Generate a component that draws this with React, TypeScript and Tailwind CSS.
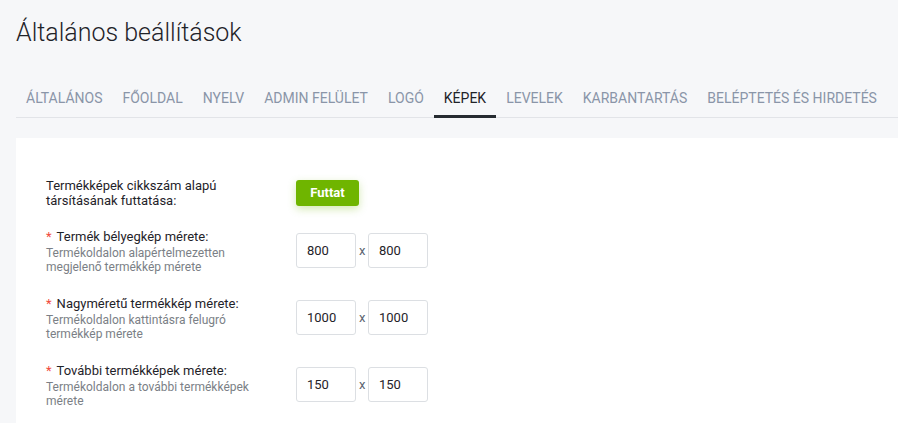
import React from "react";

const tabs = [
  "Általános",
  "Főoldal",
  "Nyelv",
  "Admin felület",
  "Logó",
  "Képek",
  "Levelek",
  "Karbantartás",
  "Beléptetés és hirdetés",
];

type SizeRow = {
  label: string;
  desc: string[];
  w: string;
  h: string;
};

const sizeRows: SizeRow[] = [
  {
    label: "Termék bélyegkép mérete:",
    desc: ["Termékoldalon alapértelmezetten", "megjelenő termékkép mérete"],
    w: "800",
    h: "800",
  },
  {
    label: "Nagyméretű termékkép mérete:",
    desc: ["Termékoldalon kattintásra felugró", "termékkép mérete"],
    w: "1000",
    h: "1000",
  },
  {
    label: "További termékképek mérete:",
    desc: ["Termékoldalon a további termékképek", "mérete"],
    w: "150",
    h: "150",
  },
];

function SizeInput({ value }: { value: string }) {
  return (
    <input
      defaultValue={value}
      className="w-[60px] h-[35px] rounded-[3px] border border-[#dcdfe3] bg-white pl-[10px] text-[13px] text-[#1f2329] outline-none"
    />
  );
}

export default function App() {
  return (
    <div className="min-h-screen bg-[#f6f7f9] font-['Roboto',sans-serif] overflow-hidden">
      {/* Page title */}
      <h1 className="pl-4 pt-[17px] text-[25px] leading-[32px] font-light text-[#1f2329]">
        Általános beállítások
      </h1>

      {/* Tabs */}
      <div className="mt-[39px] ml-4 flex border-b border-[#e2e4e8] whitespace-nowrap">
        {tabs.map((t) => (
          <div
            key={t}
            className={
              t === "Képek"
                ? "px-[10px] pb-[7px] leading-[20px] text-[14px] uppercase text-[#1f2329] border-b-[3px] border-[#262b31] -mb-px"
                : "px-[10px] pb-[7px] leading-[20px] text-[14px] uppercase text-[#8a95a8] border-b-[3px] border-transparent -mb-px"
            }
          >
            {t}
          </div>
        ))}
      </div>

      {/* Card */}
      <div className="mt-[20px] ml-4 bg-white pl-[30px] pt-[40px] pb-10">
        <div className="flex">
          <div className="w-[250px] text-[13px] leading-[15px] text-[#1f2329]">
            Termékképek cikkszám alapú
            <br />
            társításának futtatása:
          </div>
          <div className="pt-[2px]">
            <button className="h-[26px] w-[63px] rounded-[3px] bg-[#6fb500] text-[13px] font-bold text-white shadow-[0_3px_8px_rgba(111,181,0,0.3)]">
              Futtat
            </button>
          </div>
        </div>

        {sizeRows.map((r, i) => (
          <div key={r.label} className={i === 0 ? "flex items-start mt-[21px]" : "flex items-start mt-[22px]"}>
            <div className="w-[250px]">
              <div className="text-[13px] leading-[15px] text-[#1f2329]">
                <span className="text-[#f04a3c] mr-[5px]">*</span>
                {r.label}
              </div>
              <div className="mt-[3px] text-[12px] leading-[13.5px] text-[#7b7f86]">
                {r.desc[0]}
                <br />
                {r.desc[1]}
              </div>
            </div>
            <div className="mt-[4px] flex items-center">
              <SizeInput value={r.w} />
              <span className="mx-[3px] w-[6px] text-[13px] text-[#5c6470]">x</span>
              <SizeInput value={r.h} />
            </div>
          </div>
        ))}
      </div>
    </div>
  );
}
